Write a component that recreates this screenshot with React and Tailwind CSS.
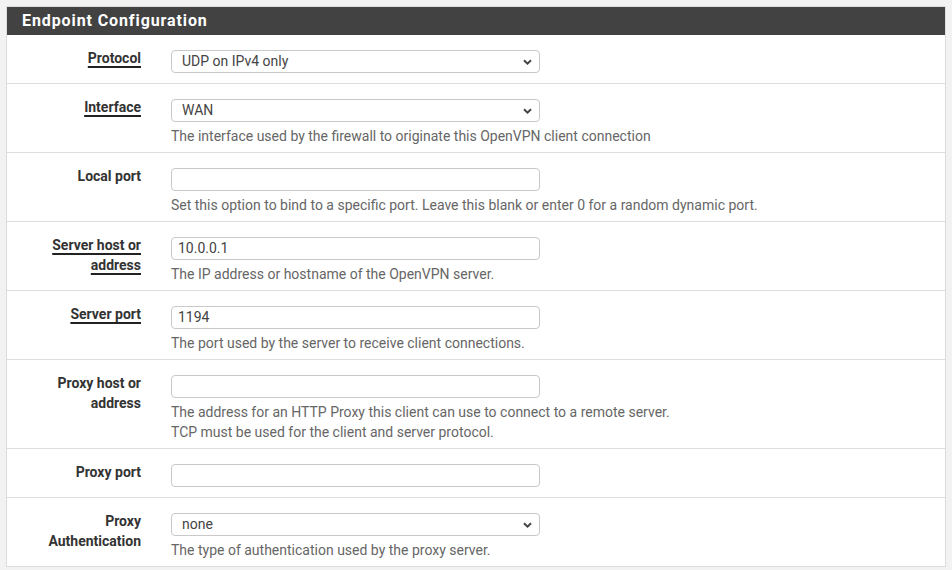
import React from "react";

const Chevron = () => (
  <svg
    className="pointer-events-none absolute right-[8px] top-1/2 -translate-y-1/2"
    width="9"
    height="6"
    viewBox="0 0 9 6"
  >
    <path d="M1 1.2 L4.5 4.6 L8 1.2" fill="none" stroke="#444" strokeWidth="2" />
  </svg>
);

function Select({ value }) {
  return (
    <div className="relative w-[369px] h-[23px]">
      <div className="h-full w-full rounded-[4px] border border-[#c9c9c9] bg-white pl-[10px] text-[14px] leading-[21px] text-[#444]">
        {value}
      </div>
      <Chevron />
    </div>
  );
}

function Input({ value }) {
  return (
    <div className="w-[369px] h-[23px] rounded-[4px] border border-[#c9c9c9] bg-white pl-[6px] text-[14px] leading-[21px] text-[#444]">
      {value}
    </div>
  );
}

function Row({ label, underline, children, help, last }) {
  return (
    <div
      className={
        "flex pt-[15px] " +
        (help ? "pb-[6px] " : "pb-[10px] ") +
        (last ? "" : "border-b border-[#dddddd]")
      }
    >
      <div className="w-[134px] shrink-0 text-right text-[14px] font-bold leading-[20px] text-[#333] -mt-[2px]">
        {label.map((l, i) => (
          <div key={i}>
            <span
              className={
                underline
                  ? "underline decoration-[1.5px] underline-offset-[3px] decoration-[#222]"
                  : ""
              }
            >
              {l}
            </span>
          </div>
        ))}
      </div>
      <div className="ml-[30px] flex flex-col">
        {children}
        {help && (
          <div className="mt-[4px] text-[14px] leading-[20px] text-[#666]">
            {help.map((h, i) => (
              <div key={i}>{h}</div>
            ))}
          </div>
        )}
      </div>
    </div>
  );
}

export default function App() {
  return (
    <div
      className="min-h-screen w-[952px] bg-[#f2f2f2] pt-[6px] pl-[6px]"
      style={{ fontFamily: "Roboto, 'Liberation Sans', sans-serif" }}
    >
      <div className="w-[940px] border border-[#dcdcdc] bg-white">
        <div className="h-[28px] bg-[#424242] pl-[15px] text-[16px] font-bold leading-[28px] tracking-[0.9px] text-white">
          Endpoint Configuration
        </div>
        <Row label={["Protocol"]} underline>
          <Select value="UDP on IPv4 only" />
        </Row>
        <Row
          label={["Interface"]}
          underline
          help={["The interface used by the firewall to originate this OpenVPN client connection"]}
        >
          <Select value="WAN" />
        </Row>
        <Row
          label={["Local port"]}
          help={["Set this option to bind to a specific port. Leave this blank or enter 0 for a random dynamic port."]}
        >
          <Input value="" />
        </Row>
        <Row
          label={["Server host or", "address"]}
          underline
          help={["The IP address or hostname of the OpenVPN server."]}
        >
          <Input value="10.0.0.1" />
        </Row>
        <Row
          label={["Server port"]}
          underline
          help={["The port used by the server to receive client connections."]}
        >
          <Input value="1194" />
        </Row>
        <Row
          label={["Proxy host or", "address"]}
          help={[
            "The address for an HTTP Proxy this client can use to connect to a remote server.",
            "TCP must be used for the client and server protocol.",
          ]}
        >
          <Input value="" />
        </Row>
        <Row label={["Proxy port"]}>
          <Input value="" />
        </Row>
        <Row
          label={["Proxy", "Authentication"]}
          help={["The type of authentication used by the proxy server."]}
          last
        >
          <Select value="none" />
        </Row>
      </div>
    </div>
  );
}
